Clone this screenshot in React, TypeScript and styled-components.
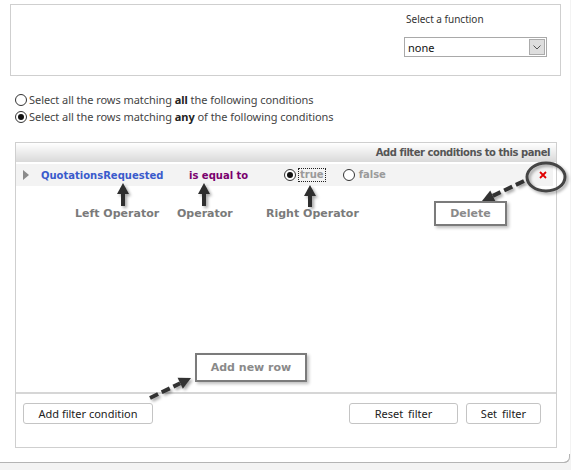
import React, {useState} from 'react';
import styled, {createGlobalStyle} from 'styled-components';

const GlobalStyle = createGlobalStyle`
  html, body {
    margin: 0;
    padding: 0;
    background: #f3f3f3;
  }
`;

const UI_FONT = `"Noto Sans", "Open Sans", sans-serif`;
const VERDANA = `"DejaVu Sans", Verdana, sans-serif`;

const Page = styled.div`
  position: relative;
  width: 571px;
  height: 470px;
  overflow: hidden;
  font-family: ${UI_FONT};
`;

const Sheet = styled.div`
  width: 570px;
  height: 463px;
  box-sizing: border-box;
  background: #fff;
  border-bottom: 1px solid #b4b4b4;
  border-bottom-right-radius: 6px;
  position: relative;
  padding-top: 4px;

  &::after {
    content: '';
    position: absolute;
    right: 0;
    bottom: -1px;
    width: 8px;
    height: 8px;
    border-right: 1px solid #b4b4b4;
    border-bottom: 1px solid #b4b4b4;
    border-bottom-right-radius: 6px;
  }
`;

const FunctionBox = styled.div`
  margin-left: 10px;
  width: 551px;
  height: 72px;
  box-sizing: border-box;
  border: 1px solid #cfcfcf;
  display: flex;
  justify-content: flex-end;
  padding: 7px 13px 0 0;
`;

const FunctionField = styled.div`
  display: flex;
  flex-direction: column;
  gap: 11px;
`;

const FieldLabel = styled.div`
  font-size: 10px;
  color: #333;
  padding-left: 2px;
  line-height: 14px;
`;

const SelectBox = styled.div`
  width: 143px;
  height: 20px;
  box-sizing: border-box;
  border: 1px solid #a9a9a9;
  display: flex;
  align-items: center;
  justify-content: space-between;
  padding: 0 1px 0 3px;
  font-size: 11px;
  color: #111;
`;

const DropButton = styled.div`
  width: 16px;
  height: 16px;
  box-sizing: border-box;
  background: #dedede;
  border: 1px solid #ababab;
  display: flex;
  align-items: center;
  justify-content: center;
`;

const MatchGroup = styled.div`
  margin: 15px 0 0 15px;
  display: flex;
  flex-direction: column;
`;

const MatchRow = styled.label`
  height: 17px;
  display: flex;
  align-items: center;
  gap: 2px;
  font-size: 11px;
  letter-spacing: -0.05px;
  color: #444;
  cursor: pointer;

  b {
    color: #222;
    font-weight: 700;
  }
`;

const RadioDot = styled.span<{ $on: boolean; $size?: number }>`
  width: ${p => p.$size ?? 12}px;
  height: ${p => p.$size ?? 12}px;
  box-sizing: border-box;
  border: 1px solid #333;
  border-radius: 50%;
  background: #fff;
  display: inline-flex;
  align-items: center;
  justify-content: center;
  flex-shrink: 0;

  &::after {
    content: '';
    width: 6px;
    height: 6px;
    border-radius: 50%;
    background: ${p => (p.$on ? '#111' : 'transparent')};
  }
`;

const Panel = styled.div`
  position: relative;
  margin: 17px 0 0 15px;
  width: 542px;
  height: 306px;
  box-sizing: border-box;
  border: 1px solid #cfcfcf;
  display: flex;
  flex-direction: column;
`;

const PanelHeader = styled.div`
  height: 19px;
  background: linear-gradient(#ffffff, #d9d9d9);
  display: flex;
  align-items: center;
  justify-content: flex-end;
  padding-right: 6px;
  font-family: ${VERDANA};
  font-weight: 700;
  font-size: 10px;
  letter-spacing: -0.45px;
  color: #555;
`;

const ConditionRow = styled.div`
  height: 22px;
  margin-top: 2px;
  margin-right: 3px;
  background: #f3f3f3;
  display: grid;
  grid-template-columns: 25px 148px 95px auto 1fr auto;
  align-items: center;
  font-family: ${VERDANA};
  font-weight: 700;
  font-size: 10px;
`;

const Expander = styled.span`
  margin-left: 7px;
  width: 0;
  height: 0;
  border-top: 5px solid transparent;
  border-bottom: 5px solid transparent;
  border-left: 6px solid #8a8a8a;
`;

const LeftOperand = styled.span`
  color: #3a5bcc;
`;

const OperatorText = styled.span`
  color: #7a006e;
`;

const Choices = styled.div`
  display: flex;
  align-items: center;
`;

const Choice = styled.span<{ $focus?: boolean }>`
  display: inline-flex;
  align-items: center;
  gap: 2px;
  margin-right: ${p => (p.$focus ? '17px' : '0')};
  color: #9a9a9a;

  em {
    font-style: normal;
    padding: 0 1px;
    border: 1px dotted ${p => (p.$focus ? '#222' : 'transparent')};
    line-height: 12px;
  }
`;

const DeleteIcon = styled.span`
  margin-right: 6px;
  display: inline-flex;
`;

const PanelBody = styled.div`
  flex: 1;
`;

const PanelFooter = styled.div`
  height: 55px;
  box-sizing: border-box;
  border-top: 2px solid #d6d6d6;
  display: flex;
  justify-content: space-between;
  align-items: flex-start;
  padding: 9px 15px 0 7px;
`;

const ButtonGroup = styled.div`
  display: flex;
  gap: 8px;
`;

const Button = styled.button<{ $w: number; $wide?: boolean }>`
  width: ${p => p.$w}px;
  height: 21px;
  padding: 0;
  background: #fff;
  border: 1px solid #c4c4c4;
  border-radius: 3px;
  font-family: ${UI_FONT};
  font-size: 11px;
  color: #222;
  word-spacing: ${p => (p.$wide ? '2px' : '0')};
  cursor: pointer;
`;

/* callouts drawn over the screenshot */
const Callouts = styled.svg`
  position: absolute;
  left: 0;
  top: 0;
  pointer-events: none;
`;

const CalloutLabel = styled.div<{ $x: number; $y: number }>`
  position: absolute;
  left: ${p => p.$x}px;
  top: ${p => p.$y}px;
  font-family: ${VERDANA};
  font-weight: 700;
  font-size: 11px;
  color: #7a7a7a;
  line-height: 13px;
  white-space: nowrap;
`;

const CalloutBox = styled.div<{ $x: number; $y: number; $w: number; $h: number }>`
  position: absolute;
  left: ${p => p.$x}px;
  top: ${p => p.$y}px;
  width: ${p => p.$w}px;
  height: ${p => p.$h}px;
  box-sizing: border-box;
  border: 2px solid #7b7b7b;
  background: #fff;
  box-shadow: 2px 2px 3px rgba(0, 0, 0, 0.25);
  display: flex;
  align-items: center;
  justify-content: center;
  font-family: ${VERDANA};
  font-weight: 700;
  font-size: 11px;
  color: #8a8a8a;
`;

const Chevron = () => (
  <svg width="8" height="5" viewBox="0 0 8 5">
    <path d="M0.5 0.5 L4 4 L7.5 0.5" fill="none" stroke="#555" strokeWidth="1" />
  </svg>
);

const RedCross = () => (
  <svg width="8" height="8" viewBox="0 0 8 8">
    <path d="M1 1 L7 7 M7 1 L1 7" stroke="#e00000" strokeWidth="1.8" />
  </svg>
);

const UpArrow = ({x, top, bottom}: { x: number; top: number; bottom: number }) => (
  <g filter="url(#shade)" fill="#2e2e2e">
    <polygon points={`${x},${top} ${x + 6},${top + 11} ${x - 6},${top + 11}`} />
    <rect x={x - 2} y={top + 10} width={4} height={bottom - top - 10} />
  </g>
);

const DashedArrow = ({x1, y1, x2, y2}: { x1: number; y1: number; x2: number; y2: number }) => {
  const a = Math.atan2(y2 - y1, x2 - x1);
  const len = 12;
  const bx = x2 - Math.cos(a) * len;
  const by = y2 - Math.sin(a) * len;
  const nx = -Math.sin(a) * 6;
  const ny = Math.cos(a) * 6;
  return (
    <g filter="url(#shade)">
      <line x1={x1} y1={y1} x2={bx} y2={by} stroke="#333" strokeWidth="4" strokeDasharray="9 4" />
      <polygon points={`${x2},${y2} ${bx + nx},${by + ny} ${bx - nx},${by - ny}`} fill="#333" />
    </g>
  );
};

const App = () => {
  const [mode, setMode] = useState<'all' | 'any'>('any');
  const [value, setValue] = useState(true);

  return (
    <Page>
      <GlobalStyle />
      <Sheet>
        <FunctionBox>
          <FunctionField>
            <FieldLabel>Select a function</FieldLabel>
            <SelectBox>
              <span>none</span>
              <DropButton><Chevron /></DropButton>
            </SelectBox>
          </FunctionField>
        </FunctionBox>

        <MatchGroup>
          <MatchRow onClick={() => setMode('all')}>
            <RadioDot $on={mode === 'all'} />
            <span>Select all the rows matching <b>all</b> the following conditions</span>
          </MatchRow>
          <MatchRow onClick={() => setMode('any')}>
            <RadioDot $on={mode === 'any'} />
            <span>Select all the rows matching <b>any</b> of the following conditions</span>
          </MatchRow>
        </MatchGroup>

        <Panel>
          <PanelHeader>Add filter conditions to this panel</PanelHeader>
          <ConditionRow>
            <Expander />
            <LeftOperand>QuotationsRequested</LeftOperand>
            <OperatorText>is equal to</OperatorText>
            <Choices>
              <Choice $focus onClick={() => setValue(true)}>
                <RadioDot $on={value} />
                <em>true</em>
              </Choice>
              <Choice onClick={() => setValue(false)}>
                <RadioDot $on={!value} />
                <em>false</em>
              </Choice>
            </Choices>
            <span />
            <DeleteIcon><RedCross /></DeleteIcon>
          </ConditionRow>
          <PanelBody />
          <PanelFooter>
            <Button $w={130}>Add filter condition</Button>
            <ButtonGroup>
              <Button $w={109} $wide>Reset filter</Button>
              <Button $w={75} $wide>Set filter</Button>
            </ButtonGroup>
          </PanelFooter>
        </Panel>
      </Sheet>

      <Callouts width="571" height="470" viewBox="0 0 571 470">
        <defs>
          <filter id="shade" x="-50%" y="-50%" width="200%" height="200%">
            <feDropShadow dx="2" dy="2" stdDeviation="1.5" floodColor="#000" floodOpacity="0.35" />
          </filter>
        </defs>
        <UpArrow x={123} top={183} bottom={206} />
        <UpArrow x={204} top={183} bottom={206} />
        <UpArrow x={310} top={185} bottom={207} />
        <ellipse cx="546" cy="177" rx="19" ry="14" fill="none" stroke="#444" strokeWidth="3" filter="url(#shade)" />
        <DashedArrow x1={524} y1={181} x2={482} y2={201} />
        <DashedArrow x1={150} y1={398} x2={191} y2={378} />
      </Callouts>

      <CalloutLabel $x={75} $y={207}>Left Operator</CalloutLabel>
      <CalloutLabel $x={177} $y={207}>Operator</CalloutLabel>
      <CalloutLabel $x={266} $y={207}>Right Operator</CalloutLabel>
      <CalloutBox $x={434} $y={201} $w={73} $h={25}>Delete</CalloutBox>
      <CalloutBox $x={195} $y={353} $w={112} $h={29}>Add new row</CalloutBox>
    </Page>
  );
};

export default App;
